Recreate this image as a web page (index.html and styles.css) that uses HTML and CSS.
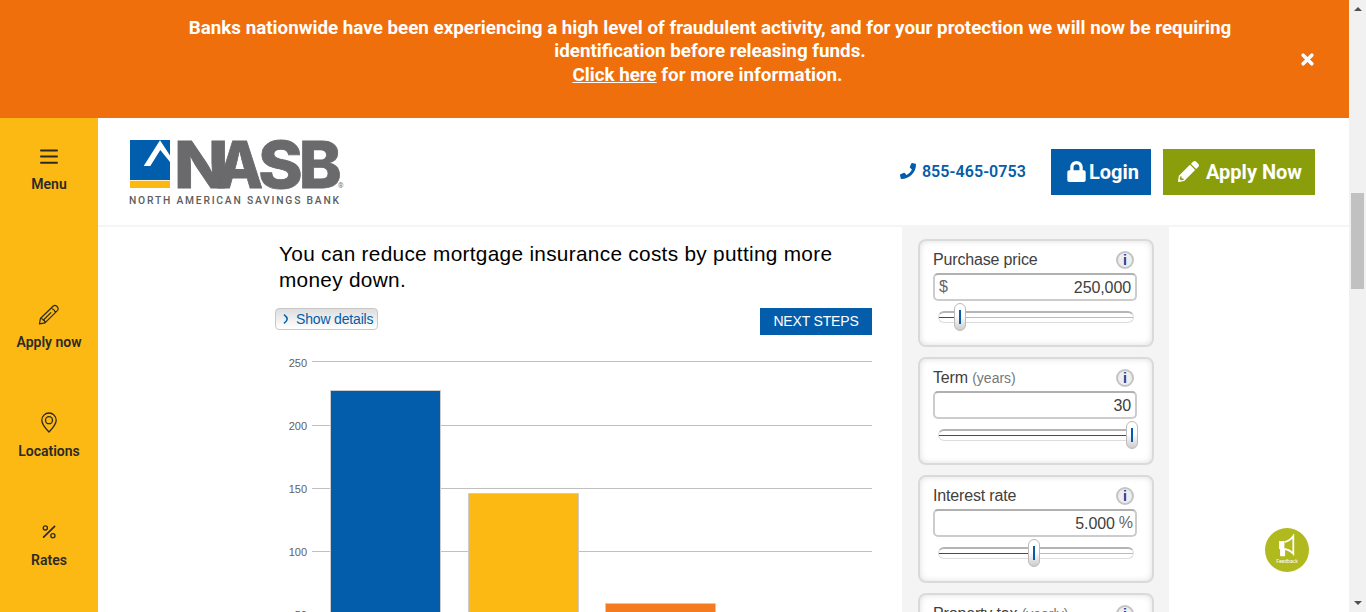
FILE: index.html
```
<!DOCTYPE html>
<html lang="en">
<head>
<meta charset="utf-8">
<title>NASB Mortgage Calculator</title>
<link rel="stylesheet" href="styles.css">
</head>
<body>
<div class="viewport">
  <div class="page">
    <div class="banner">
      <p class="banner-text"><span>Banks nationwide have been experiencing a high level of fraudulent activity, and for your protection we will now be requiring</span><br><span>identification before releasing funds.</span><br><span class="more"><a href="#">Click here</a> for more information.</span></p>
      <svg class="close" viewBox="0 0 12 12"><path d="M2 2l8 8M10 2l-8 8" stroke="#fff" stroke-width="3.2" stroke-linecap="round"/></svg>
    </div>
    <div class="body">
      <nav class="sidebar">
        <div class="nav-item menu"><svg width="20" height="20" viewBox="0 0 20 20" fill="none" stroke="#2b2a26" stroke-width="2" stroke-linecap="round"><path d="M2 4.500h16M2 10.600h16M2 16.700h16"/></svg><span>Menu</span></div>
        <div class="nav-item apply"><svg width="22" height="22" viewBox="0 0 22 22" fill="none" stroke="#2b2a26" stroke-width="1.2" stroke-linejoin="round"><path d="M1.500 20.800l.9-5.300L15.300 3q1.600-1.300 3.100 0l1.200 1.200q1.300 1.500 0 3.100L7 19.900zM2.400 15.500q2.700.1 2.800 1.700q1.700 0 1.800 2.700M13.200 5q3.300 1.400 4.300 4.300M5.200 17.200l8-7.800"/></svg><span>Apply now</span></div>
        <div class="nav-item locations"><svg width="22" height="22" viewBox="0 0 22 22" fill="none" stroke="#2b2a26" stroke-width="1.300" stroke-linejoin="round"><path d="M11 21Q3.800 13.500 3.800 9.200a7.200 7.200 0 0 1 14.400 0Q18.200 13.500 11 21z"/><circle cx="11" cy="9.200" r="3.500"/></svg><span>Locations</span></div>
        <div class="nav-item rates"><svg width="22" height="22" viewBox="0 0 22 22" fill="none" stroke="#2b2a26" stroke-width="1.300" stroke-linecap="round"><path d="M5.600 17.200L16.600 6.400" stroke-width="1.700"/><circle cx="7.300" cy="7.900" r="2.100"/><circle cx="14.900" cy="15.700" r="2.100"/></svg><span>Rates</span></div>
      </nav>
      <main class="main">
        <header class="header">
          <svg class="logo" width="216" height="70" viewBox="129 138 216 70">
            <path d="M130 140h40v40h-40z" fill="#005eac"/>
            <path d="M130 180.700h40v7.300h-40z" fill="#fdb913"/>
            <path d="M143.700 166L160 140.300L170 155.500V162L160.300 150L150.300 166z" fill="#fff"/>
            <g class="wordmark">
              <text transform="translate(173.900 187.600) scale(1.080 .980)">N</text>
              <text transform="translate(216.600 187.600) scale(.920 .980)">A</text>
              <text transform="translate(258.200 187.600) scale(1.020 .980)">S</text>
              <text transform="translate(298.900 187.600) scale(.970 .980)">B</text>
            </g>
            <text class="tagline" x="129" y="204" textLength="210">NORTH AMERICAN SAVINGS BANK</text>
            <text class="reg" x="338" y="187.500">®</text>
          </svg>
          <div class="actions">
            <a class="phone" href="#"><svg width="16" height="16" viewBox="0 0 512 512"><path fill="#045daa" d="M493.400 24.600l-104-24c-11.300-2.600-22.900 3.300-27.500 13.900l-48 112c-4.200 9.800-1.400 21.300 6.900 28l60.600 49.600c-36 76.700-98.900 140.500-177.200 177.200l-49.600-60.600c-6.800-8.300-18.200-11.100-28-6.900l-112 48C3.900 366.500-2 378.100.600 389.400l24 104C27.100 504.200 36.700 512 48 512c256.100 0 464-207.500 464-464 0-11.200-7.700-20.900-18.600-23.400z"/></svg><span>855-465-0753</span></a>
            <a class="btn login" href="#"><svg width="19" height="21" viewBox="0 0 448 512"><path fill="#fff" d="M400 224h-24v-72C376 68.200 307.800 0 224 0S72 68.200 72 152v72H48c-26.500 0-48 21.500-48 48v192c0 26.500 21.500 48 48 48h352c26.500 0 48-21.500 48-48V272c0-26.500-21.500-48-48-48zm-104 0H152v-72c0-39.700 32.300-72 72-72s72 32.300 72 72v72z"/></svg><span>Login</span></a>
            <a class="btn now" href="#"><svg width="21" height="21" viewBox="0 0 512 512"><path fill="#fff" d="M497.900 142.100l-46.100 46.100c-4.700 4.700-12.300 4.700-17 0l-111-111c-4.700-4.700-4.700-12.300 0-17l46.100-46.100c18.700-18.700 49.100-18.700 67.900 0l60.100 60.100c18.800 18.700 18.800 49.100 0 67.900zM284.200 99.800L21.600 362.400.4 483.900c-2.900 16.400 11.400 30.600 27.800 27.800l121.500-21.300 262.600-262.600c4.700-4.700 4.700-12.300 0-17l-111-111c-4.800-4.700-12.400-4.700-17.100 0zM88 424h48v36.300l-64.500 11.300-31.100-31.100L51.700 376H88v48z"/></svg><span>Apply Now</span></a>
          </div>
        </header>
        <div class="content">
          <section class="results">
            <h2>You can reduce mortgage insurance costs by putting more<br>money down.</h2>
            <div class="toolbar">
              <button class="details"><svg width="6" height="10" viewBox="0 0 6 10" fill="none" stroke="#005eac" stroke-width="1.500"><path d="M1 .6Q4.200 3 4.200 5Q4.200 7 1 9.400"/></svg><span>Show details</span></button>
              <button class="next">NEXT STEPS</button>
            </div>
            <svg class="chart" width="597" height="267" viewBox="275 345 597 267">
              <path d="M312 361.500h560M312 425.500h560M312 488.500h560M312 551.500h560" stroke="#c0c0c0"/>
              <g stroke="#ccc">
                <path d="M330.500 390.500h110v240h-110z" fill="#045daa"/>
                <path d="M468.500 493.500h110v140h-110z" fill="#fdb913"/>
                <path d="M605.500 603.500h110v40h-110z" fill="#f47b20"/>
              </g>
              <g class="ticks"><text x="307" y="367">250</text><text x="307" y="430">200</text><text x="307" y="493">150</text><text x="307" y="556">100</text><text x="307" y="619">50</text></g>
            </svg>
          </section>
          <aside class="panel">
            <div class="card"><div class="label"><span>Purchase price</span><i class="info">i</i></div><div class="field"><span class="unit">$</span><span class="value">250,000</span></div><div class="track"><div class="fill" style="width:8%"></div><div class="thumb" style="left:15px"></div></div></div>
            <div class="card"><div class="label"><span>Term <small>(years)</small></span><i class="info">i</i></div><div class="field"><span class="value">30</span></div><div class="track"><div class="fill" style="width:100%"></div><div class="thumb" style="left:187px"></div></div></div>
            <div class="card"><div class="label"><span>Interest rate</span><i class="info">i</i></div><div class="field pct"><span class="value">5.000</span><span class="unit">%</span></div><div class="track"><div class="fill" style="width:46%"></div><div class="thumb" style="left:89px"></div></div></div>
            <div class="card"><div class="label"><span>Property tax <small>(yearly)</small></span><i class="info">i</i></div><div class="field"></div></div>
          </aside>
        </div>
      </main>
    </div>
    <div class="feedback"><svg width="22" height="24" viewBox="0 0 22 24" fill="none" stroke="#fff"><path d="M3.700 7.800h4v6.700h-4zM4.800 14.500v7h3.600v-7" fill="#fff" stroke-width="1.400" stroke-linejoin="round"/><path d="M8.500 8Q14 7 17.300 2V19.800Q14 15.800 8.500 14.800" stroke-width="1.800"/></svg><span>Feedback</span></div>
  </div>
  <div class="scrollbar"><i class="up"></i><i class="grip"></i><i class="down"></i></div>
</div>
</body>
</html>
```

FILE: styles.css
```
* { box-sizing: border-box; }
body { margin: 0; overflow: hidden; font-family: Roboto, sans-serif; background: #fff; }
a { color: inherit; }
.viewport { display: flex; width: 1366px; height: 612px; overflow: hidden; }
.page { width: 1349px; position: relative; }
.banner { height: 118px; background: #ef6f0c; color: #fff; padding: 17px 0 0 71px; position: relative; }
.banner-text { margin: 0; width: 1278px; text-align: center; font-size: 18.8px; font-weight: 700; line-height: 23.4px; white-space: nowrap; }
.more { margin-right: 5px; }
.close { position: absolute; left: 1301px; top: 53px; width: 13px; height: 13px; }
.body { display: flex; height: 494px; }
.sidebar { width: 98px; background: #fdb913; color: #2b2a26; padding-top: 28px; flex: none; }
.nav-item { display: flex; flex-direction: column; align-items: center; font-size: 14px; font-weight: 600; line-height: 18px; }
.nav-item.menu { gap: 9px; margin-bottom: 110px; }
.nav-item.apply { gap: 8px; margin-bottom: 60px; }
.nav-item.locations { gap: 9px; margin-bottom: 60px; }
.nav-item.rates { gap: 9px; }
.main { width: 1251px; }
.header { height: 109px; border-bottom: 2px solid #f5f5f5; display: flex; justify-content: space-between; align-items: flex-start; padding: 20px 34px 0 31px; }
.logo { overflow: visible; }
.wordmark { font: 800 66px Inter, sans-serif; fill: #6a6a6c; stroke: #6a6a6c; stroke-width: .8px; }
.tagline { font: 500 10.3px Roboto, sans-serif; fill: #5d5d60; }
.reg { font: 7px Roboto, sans-serif; fill: #77777a; }
.actions { display: flex; align-items: center; padding-top: 11px; }
.actions a { text-decoration: none; }
.phone { display: flex; align-items: center; gap: 6px; color: #045daa; font-size: 16px; letter-spacing: .08px; font-weight: 600; margin: -2px 25px 0 0; }
.btn { height: 46px; display: flex; align-items: center; color: #fff; font-size: 20px; font-weight: 700; white-space: nowrap; }
.btn svg { margin-top: -1px; }
.login { width: 100px; background: #045daa; margin-right: 12px; padding-left: 16px; gap: 3px; }
.now { width: 152px; background: #8a9e0b; padding-left: 15px; gap: 7px; }
.content { display: flex; height: 385px; padding-left: 177px; font-family: "Liberation Sans", Arial, sans-serif; }
.results { width: 597px; margin-right: 30px; }
.results h2 { margin: 0; padding: 14px 0 0 4px; font-size: 20.8px; line-height: 26px; font-weight: 400; color: #000; letter-spacing: .3px; white-space: nowrap; }
.toolbar { display: flex; justify-content: space-between; align-items: flex-start; height: 52px; padding-top: 15px; }
.toolbar button { font: 14px "Liberation Sans", Arial, sans-serif; letter-spacing: -.17px; margin: 0; }
.details { width: 103px; height: 22px; display: flex; align-items: center; gap: 7px; padding: 0 0 0 7px; white-space: nowrap; color: #045daa; border: 1px solid #c8c8c8; border-radius: 4px; background: linear-gradient(#dedede, #fff); }
.toolbar .next { width: 112px; height: 27px; border: 0; padding: 0 0 2px; background: #045daa; color: #fff; }
.chart { display: block; }
.ticks { font: 11px "Liberation Sans", Arial, sans-serif; fill: #606060; text-anchor: end; }
.panel { width: 267px; background: #f4f4f4; padding: 12px 15px 0 16px; overflow: hidden; }
.card { height: 108px; margin-bottom: 10px; border: 2px solid #dadada; border-radius: 8px; background: #fff; box-shadow: inset 0 0 6px #ddd; padding: 9px 15px 0 13px; }
.label { display: flex; align-items: center; justify-content: space-between; height: 20px; padding-right: 3px; font-size: 16px; letter-spacing: -.16px; color: #404040; }
.label small { font-size: 14px; letter-spacing: 0; color: #777; }
.info { width: 18px; height: 18px; border: 2px solid #c4c4c4; border-radius: 50%; background: #eee; color: #1b3f9c; font: bold 14px/14px "Liberation Sans", Arial, sans-serif; letter-spacing: 0; text-align: center; }
.field { width: 204px; height: 28px; margin-top: 3px; border: 2px solid #ccc; border-top-color: #b0b0b0; border-radius: 5px; display: flex; align-items: center; padding: 1px 4px 0; font-size: 16px; letter-spacing: -.1px; color: #404040; }
.field .unit { color: #666; margin-top: -2px; }
.field .value { margin-left: auto; }
.field.pct { padding-right: 2px; gap: 4px; }
.track { position: relative; width: 196px; height: 12px; margin: 10px 0 0 5px; border: 1px solid #ddd; border-top: 2px solid #b5b5b5; border-radius: 6px; background: linear-gradient(#fff 0 4px, #bbb 4px 5px, #fff 5px); }
.fill { height: 1px; margin-top: 4px; background: #045daa; }
.thumb { position: absolute; top: -10px; width: 12px; height: 28px; border: 1px solid #bbb; border-radius: 6px; background: linear-gradient(#fff 45%, #ccc); }
.thumb::after { content: ""; display: block; width: 2px; height: 14px; margin: 6px auto 0; background: #045daa; }
.feedback { position: absolute; left: 1265px; top: 528px; width: 44px; height: 44px; border-radius: 50%; background: #b0b91e; color: #fff; display: flex; flex-direction: column; align-items: center; padding-top: 6px; font-size: 5px; line-height: 6px; }
.scrollbar { width: 17px; background: #f1f1f1; display: flex; flex-direction: column; align-items: center; }
.up { border: 4px solid transparent; border-top: 0; border-bottom-color: #505050; margin-top: 7px; }
.grip { width: 13px; height: 96px; background: #c1c1c1; margin-top: 182px; }
.down { border: 4px solid transparent; border-bottom: 0; border-top-color: #505050; margin: auto 0 7px; }
```
